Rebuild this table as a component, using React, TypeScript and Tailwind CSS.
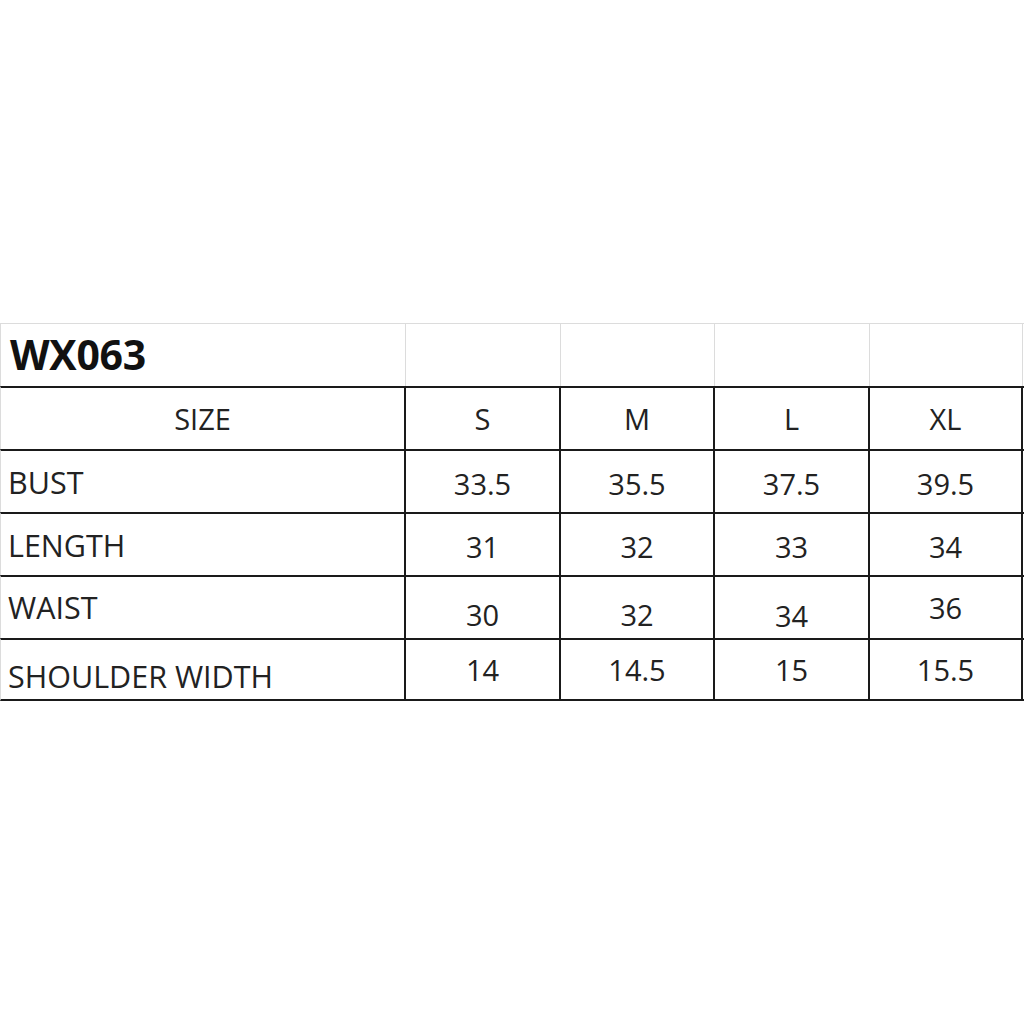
import React from 'react';

// size chart data
const sizes = ['S', 'M', 'L', 'XL'];

type Row = { label: string; values: string[]; pad: string[]; labelPad: string };

const rows: Row[] = [
    { label: 'BUST', values: ['33.5', '35.5', '37.5', '39.5'], pad: ['pt-[4px]', 'pt-[4px]', 'pt-[4px]', 'pt-[4px]'], labelPad: 'pt-[3px]' },
    { label: 'LENGTH', values: ['31', '32', '33', '34'], pad: ['pt-[4px]', 'pt-[4px]', 'pt-[4px]', 'pt-[4px]'], labelPad: 'pt-[3px]' },
    { label: 'WAIST', values: ['30', '32', '34', '36'], pad: ['pt-[15px]', 'pt-[15px]', 'pt-[16px]', 'pt-[1px]'], labelPad: 'pt-[0px]' },
    { label: 'SHOULDER WIDTH', values: ['14', '14.5', '15', '15.5'], pad: ['pt-[0px]', 'pt-[0px]', 'pt-[0px]', 'pt-[0px]'], labelPad: 'pt-[14px]' },
];

const cols = 'grid grid-cols-[405px_155px_154px_155px_153px]';

export default function App() {
    return (
        <div className="min-h-screen w-[1024px] bg-white pt-[323px] text-[#222]" style={{ fontFamily: '"Open Sans", "Noto Sans", sans-serif' }}>
            {/* header row (light grid) */}
            <div className={`${cols} h-[63px] border-t border-l border-[#dcdcdc]`}>
                <div className="flex items-center border-r border-[#dcdcdc] pl-[9px] pt-[0px] text-[41px] font-bold tracking-[-0.3px] text-[#111]">
                    WX063
                </div>
                {sizes.map((s) => (
                    <div key={s} className="border-r border-[#dcdcdc]" />
                ))}
            </div>

            {/* size row */}
            <div className={`${cols} h-[63px] border-t-2 border-l border-t-[#1a1a1a] border-l-[#dcdcdc]`}>
                <div className="flex items-center justify-center border-r-2 border-[#1a1a1a] text-[29px]">SIZE</div>
                {sizes.map((s) => (
                    <div key={s} className="flex items-center justify-center border-r-2 border-[#1a1a1a] text-[29px]">
                        {s}
                    </div>
                ))}
            </div>

            {rows.map((r, i) => (
                <div
                    key={r.label}
                    className={`${cols} h-[63px] border-t-2 border-l border-t-[#1a1a1a] border-l-[#dcdcdc] ${i === rows.length - 1 ? 'border-b-2 border-b-[#1a1a1a]' : ''}`}
                >
                    <div className={`flex items-center border-r-2 border-[#1a1a1a] pl-[7px] text-[30.5px] ${r.labelPad}`}>
                        {r.label}
                    </div>
                    {r.values.map((v, j) => (
                        <div key={j} className={`flex items-center justify-center border-r-2 border-[#1a1a1a] text-[29px] ${r.pad[j]}`}>
                            {v}
                        </div>
                    ))}
                </div>
            ))}
        </div>
    );
}
